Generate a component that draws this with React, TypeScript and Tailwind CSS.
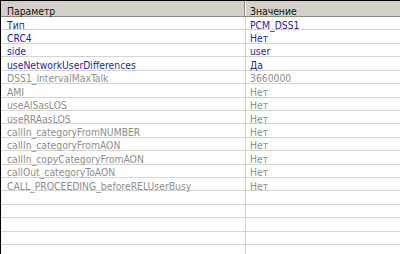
import React from "react";

const rows: { k: string; v: string; on: boolean }[] = [
  { k: "Тип", v: "PCM_DSS1", on: true },
  { k: "CRC4", v: "Нет", on: true },
  { k: "side", v: "user", on: true },
  { k: "useNetworkUserDifferences", v: "Да", on: true },
  { k: "DSS1_intervalMaxTalk", v: "3660000", on: false },
  { k: "AMI", v: "Нет", on: false },
  { k: "useAISasLOS", v: "Нет", on: false },
  { k: "useRRAasLOS", v: "Нет", on: false },
  { k: "callIn_categoryFromNUMBER", v: "Нет", on: false },
  { k: "callIn_categoryFromAON", v: "Нет", on: false },
  { k: "callIn_copyCategoryFromAON", v: "Нет", on: false },
  { k: "callOut_categoryToAON", v: "Нет", on: false },
  { k: "CALL_PROCEEDING_beforeRELUserBusy", v: "Нет", on: false },
  { k: "", v: "", on: false },
  { k: "", v: "", on: false },
  { k: "", v: "", on: false },
  { k: "", v: "", on: false },
  { k: "", v: "", on: false },
];

export default function App() {
  return (
    <div
      className="w-[400px] h-[254px] overflow-hidden bg-white border-l border-t border-black flex flex-col"
      style={{ fontFamily: '"DejaVu Sans Condensed", "DejaVu Sans", sans-serif' }}
    >
      <div className="flex h-[16px] shrink-0 bg-[#d4d0c8] border-b border-[#8a8780] text-[10.3px] leading-none text-[#111]">
        <div className="w-[244px] shrink-0 pl-[6px] pt-[5px] flex items-center border-r border-[#8a8780]">
          Параметр
        </div>
        <div className="w-px shrink-0 bg-white" />
        <div className="flex-1 pl-[4px] pt-[5px] flex items-center">Значение</div>
      </div>
      {rows.map((r, i) => (
        <div
          key={i}
          className={`flex h-[13.43px] shrink-0 border-b border-[#d6d3cc] text-[10.3px] leading-none ${
            r.on ? "text-[#1f1fa0]" : "text-[#8e8e8e]"
          }`}
        >
          <div className="w-[245px] shrink-0 pl-[6px] pt-[3px] flex items-center border-r border-[#d6d3cc] whitespace-nowrap">
            {r.k}
          </div>
          <div className="flex-1 pl-[4px] pt-[3px] flex items-center whitespace-nowrap">{r.v}</div>
        </div>
      ))}
    </div>
  );
}
